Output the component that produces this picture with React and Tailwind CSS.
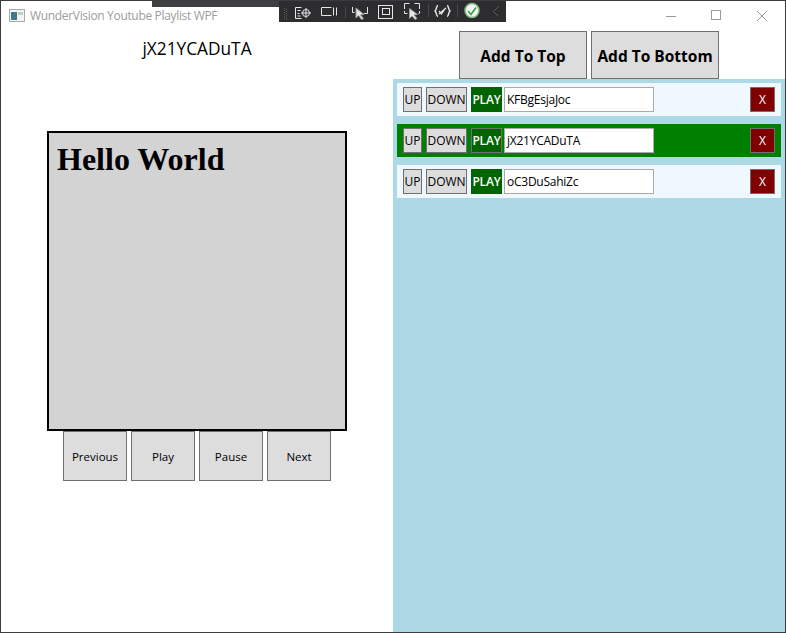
import React from "react";

const font = { fontFamily: '"Open Sans", "Noto Sans", sans-serif' };

function Btn({ children, className = "" }) {
  return (
    <button className={"flex items-center justify-center border border-[#707070] bg-[#dddddd] text-black " + className}>
      {children}
    </button>
  );
}

function Row({ id, active }) {
  return (
    <div className={"flex h-[33px] items-center pl-[6px] pr-[6px] " + (active ? "bg-[#008000]" : "bg-[#f0f8ff]")}>
      <Btn className="h-[25px] w-[19px] text-[12px]">UP</Btn>
      <Btn className="ml-[4px] h-[25px] w-[41px] text-[12px]">DOWN</Btn>
      <button className={"ml-[4px] flex h-[25px] w-[31px] items-center justify-center border bg-[#006400] text-[12px] font-semibold tracking-[-0.2px] text-white " + (active ? "border-[#707070]" : "border-[#006400]")}>
        PLAY
      </button>
      <div className="ml-[2px] flex h-[25px] w-[150px] items-center border border-[#a9a9a9] bg-white pl-[2px] text-[12px] tracking-[-0.25px] text-black">
        {id}
      </div>
      <button className="ml-auto flex h-[25px] w-[25px] items-center justify-center border border-[#707070] bg-[#800000] text-[12px] font-medium text-white">
        X
      </button>
    </div>
  );
}

function Toolbar() {
  return (
    <div className="absolute left-[278px] top-0 h-[21px] w-[227px] bg-[#2d2d30]">
      <svg width="227" height="21" viewBox="279 1 227 21" fill="none" stroke="#e6e6e6" strokeWidth="1">
        <path d="M284.500 8v12M286.500 9v11" stroke="#5a5a5a" strokeDasharray="1 1" />
        <path d="M301.500 7.500h-6v11h6M297.500 10.500h3M297.500 13.500h2M297.500 16h3" />
        <circle cx="306" cy="13" r="3.500" />
        <path d="M306 8v10M301 13h10" />
        <path d="M331.500 7.500h-10v8h10M333.500 7.500v8M336.500 7.500v8" />
        <path d="M345.500 7v11" stroke="#4a4a4a" />
        <path d="M352.500 7v5.500h2M367.500 7v6.500h-3.500" />
        <path d="M356 8l0 10 2.500-2.500 3 4 2-1-3-3.500 3.500-.5z" fill="#e6e6e6" stroke="#9a9a9a" />
        <rect x="378.500" y="5.500" width="14" height="13" />
        <rect x="382.500" y="8.500" width="7" height="6" />
        <path d="M404.500 9V3.500h5M414.500 3.500h5V9M404.500 11v2.500h3M419.500 11v2.500h-1" />
        <path d="M409.500 8.500v10l2.500-2.500 3 3.500 2-1-3-3.500 3.500-.5z" fill="#e6e6e6" stroke="#9a9a9a" />
        <path d="M428.500 4v13" stroke="#4a4a4a" />
        <path d="M438 5.500c-2 0-1 4-3 5.500 2 1.500 1 5.500 3 5.500M447 5.500c2 0 1 4 3 5.500-2 1.500-1 5.500-3 5.500" strokeWidth="1.500" />
        <path d="M439 11l2.500 3 4-6M446 8l-7 6" strokeWidth="1.200" />
        <path d="M457.500 4v13" stroke="#4a4a4a" />
        <circle cx="472" cy="10.500" r="7" fill="#f3f3f3" stroke="#7fb87f" strokeWidth="1.500" />
        <path d="M468 11l3 3.500 5-7" stroke="#2e9e3a" strokeWidth="1.500" />
        <path d="M498.500 6.500l-5 5 5 5" stroke="#5f5f63" />
      </svg>
    </div>
  );
}

export default function App() {
  return (
    <div className="relative flex h-[633px] w-[786px] flex-col overflow-hidden border border-[#3c3c3c] bg-white" style={font}>
      {/* Title bar */}
      <div className="flex h-[29px] shrink-0 items-center pl-[8px]">
        <svg width="16" height="14" viewBox="0 0 16 14">
          <rect x="0.500" y="0.500" width="15" height="12" fill="#f4f4f4" stroke="#a9a9a9" />
          <rect x="2" y="3" width="6" height="8" fill="#3f7d8c" />
          <rect x="9" y="3" width="5" height="3" fill="#bcd8bc" />
        </svg>
        <span className="ml-[5px] text-[12px] tracking-[-0.33px] text-[#9c9c9c]">WunderVision Youtube Playlist WPF</span>
        <div className="ml-auto flex items-center">
          <svg width="12" height="12" viewBox="0 0 12 12" className="mr-[34px]" fill="none" stroke="#9a9a9a">
            <path d="M1 6.500h10" />
          </svg>
          <svg width="11" height="11" viewBox="0 0 11 11" className="mr-[34px]" fill="none" stroke="#9a9a9a">
            <rect x="0.500" y="0.500" width="9" height="9" />
          </svg>
          <svg width="12" height="12" viewBox="0 0 12 12" className="mr-[17px]" fill="none" stroke="#9a9a9a">
            <path d="M1 1l10 10M11 1L1 11" />
          </svg>
        </div>
      </div>

      {/* Body */}
      <div className="flex min-h-0 flex-1">
        {/* Left column */}
        <div className="flex w-[392px] shrink-0 flex-col items-center">
          <div className="h-[101px] w-full pt-[7px] text-center text-[17.300px] leading-[24px] text-black">jX21YCADuTA</div>
          <div className="h-[300px] w-[300px] border-2 border-black bg-[#d3d3d3] pl-[8px] pt-[8px] text-[32px] font-bold leading-[37px] text-black" style={{ fontFamily: '"Liberation Serif", serif' }}>
            Hello World
          </div>
          <div className="flex gap-[4px] text-[11.500px]">
            <Btn className="h-[50px] w-[64px] pt-[2px]">Previous</Btn>
            <Btn className="h-[50px] w-[64px] pt-[2px]">Play</Btn>
            <Btn className="h-[50px] w-[64px] pt-[2px]">Pause</Btn>
            <Btn className="h-[50px] w-[64px] pt-[2px]">Next</Btn>
          </div>
        </div>

        {/* Right column */}
        <div className="flex w-[392px] shrink-0 flex-col">
          <div className="flex h-[49px] shrink-0 justify-start gap-[4px] pl-[66px] pt-[1px] text-[15.500px] font-bold">
            <Btn className="h-[48px] w-[128px] pt-[4px]">Add To Top</Btn>
            <Btn className="h-[48px] w-[128px] pt-[4px]">Add To Bottom</Btn>
          </div>
          <div className="flex flex-1 flex-col gap-[8px] bg-[#add8e6] pl-[4px] pr-[4px] pt-[4px]">
            <Row id="KFBgEsjaJoc" />
            <Row id="jX21YCADuTA" active />
            <Row id="oC3DuSahiZc" />
          </div>
        </div>
      </div>

      <div className="absolute left-[151px] top-0 h-[6px] w-[247px] bg-[#3f3f41]" />
      <Toolbar />
    </div>
  );
}
